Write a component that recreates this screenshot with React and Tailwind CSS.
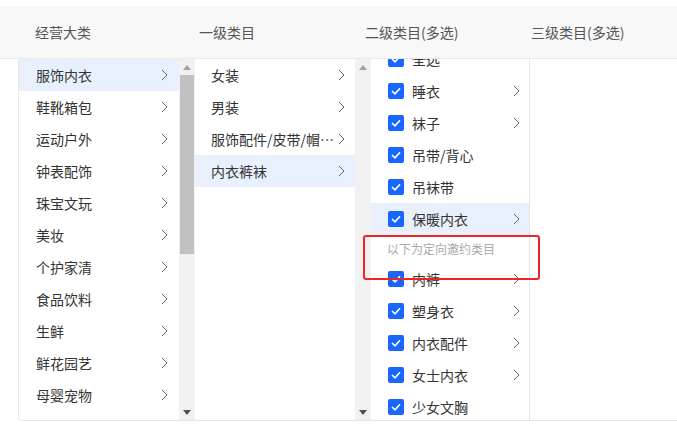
import React from "react";

const FONT = { fontFamily: '"Noto Sans CJK SC", "Noto Sans", sans-serif' };

function Chevron() {
  return (
    <svg width="7" height="12" viewBox="0 0 7 12" className="shrink-0">
      <path d="M1 1 L6 6 L1 11" fill="none" stroke="#666" strokeWidth="1" />
    </svg>
  );
}

function Check() {
  return (
    <span className="w-4 h-4 rounded-[2px] bg-[#1966ff] flex items-center justify-center shrink-0">
      <svg width="10" height="8" viewBox="0 0 10 8">
        <path d="M1 4 L4 6.8 L9 1.2" fill="none" stroke="#fff" strokeWidth="1.6" />
      </svg>
    </span>
  );
}

function ScrollBar({ thumb }) {
  return (
    <div className="w-[16px] h-full bg-[#f1f1f1] flex flex-col items-center shrink-0">
      <div className="h-[16px] flex items-center justify-center shrink-0">
        <svg width="8" height="5" viewBox="0 0 8 5"><path d="M0 5 L4 0 L8 5 Z" fill="#a3a3a3" /></svg>
      </div>
      <div className="flex-1 w-full px-[1px]">
        {thumb ? <div className="mt-0 h-[179px] w-full bg-[#c1c1c1]" /> : null}
      </div>
      <div className="h-[16px] flex items-center justify-center shrink-0">
        <svg width="8" height="5" viewBox="0 0 8 5"><path d="M0 0 L8 0 L4 5 Z" fill="#505050" /></svg>
      </div>
    </div>
  );
}

const col1 = ["服饰内衣", "鞋靴箱包", "运动户外", "钟表配饰", "珠宝文玩", "美妆", "个护家清", "食品饮料", "生鲜", "鲜花园艺", "母婴宠物", "医药保健"];
const col2 = ["女装", "男装", "服饰配件/皮带/帽子/围巾", "内衣裤袜"];
const col3a = [
  ["全选", false],
  ["睡衣", true],
  ["袜子", true],
  ["吊带/背心", false],
  ["吊袜带", false],
  ["保暖内衣", true, true],
];
const col3b = [
  ["内裤", true],
  ["塑身衣", true],
  ["内衣配件", true],
  ["女士内衣", true],
  ["少女文胸", false],
];

function Row3({ label, chev, active }) {
  return (
    <div className={`h-[32px] flex items-center pl-[17px] pr-[9px] shrink-0 ${active ? "bg-[#e8effd]" : ""}`}>
      <Check />
      <span className="ml-[8px] flex-1 text-[14px] text-[#333]">{label}</span>
      {chev ? <Chevron /> : null}
    </div>
  );
}

export default function App() {
  return (
    <div className="w-[677px] h-[444px] bg-white relative overflow-hidden" style={FONT}>
      <div className="mt-[6px] h-[53px] bg-[#f8f8f8] border-b border-[#e9e9e9] flex items-center text-[14px] text-[#555]">
        <div className="pl-[35px] w-[199px]">经营大类</div>
        <div className="w-[166px]">一级类目</div>
        <div className="w-[166px]">二级类目(多选)</div>
        <div>三级类目(多选)</div>
      </div>
      <div className="ml-[18px] h-[362px] flex border-l border-b border-[#e6e6e6] rounded-bl-[4px] overflow-hidden">
        <div className="w-[160px] h-full overflow-hidden flex flex-col shrink-0">
          {col1.map((t, i) => (
            <div key={t} className={`h-[32px] shrink-0 flex items-center pl-[17px] pr-[11px] ${i === 0 ? "bg-[#e8effd]" : ""}`}>
              <span className="flex-1 text-[14px] text-[#333]">{t}</span>
              <Chevron />
            </div>
          ))}
        </div>
        <ScrollBar thumb />
        <div className="w-[160px] h-full flex flex-col shrink-0">
          {col2.map((t, i) => (
            <div key={t} className={`h-[32px] shrink-0 flex items-center pl-[16px] pr-[10px] ${i === 3 ? "bg-[#e8effd]" : ""}`}>
              <span className="flex-1 min-w-0 truncate text-[14px] text-[#333]">{t}</span>
              <Chevron />
            </div>
          ))}
        </div>
        <ScrollBar />
        <div className="w-[159px] h-full overflow-hidden border-r border-[#e6e6e6] shrink-0">
          <div className="-mt-[16px] flex flex-col">
            {col3a.map(([t, c, a]) => (
              <Row3 key={t} label={t} chev={c} active={a} />
            ))}
            <div className="h-[28px] flex items-center pl-[16px] text-[12px] text-[#aaa] shrink-0">以下为定向邀约类目</div>
            {col3b.map(([t, c]) => (
              <Row3 key={t} label={t} chev={c} />
            ))}
          </div>
        </div>
        <div className="flex-1" />
      </div>
      <div className="absolute left-[363px] top-[235px] w-[177px] h-[45px] border-2 border-[#f02424] rounded-[3px]" />
    </div>
  );
}
